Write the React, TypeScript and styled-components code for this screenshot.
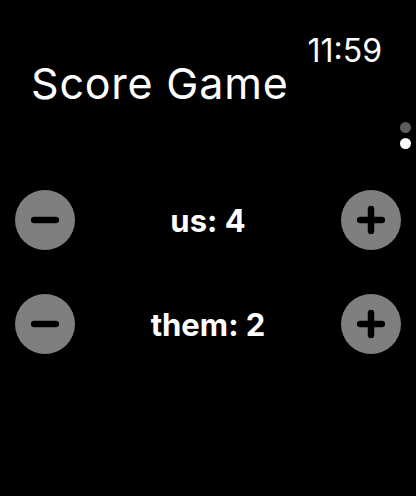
import React, { useState } from 'react'
import styled, { createGlobalStyle } from 'styled-components'

const GlobalStyle = createGlobalStyle`
  html, body {
    margin: 0;
    padding: 0;
    background: #000;
  }
  body {
    font-family: Inter, "Liberation Sans", sans-serif;
    color: #fff;
  }
`

const Screen = styled.div`
  position: relative;
  width: 416px;
  height: 496px;
  background: #000;
  display: flex;
  flex-direction: column;
  overflow: hidden;
`

const StatusBar = styled.div`
  display: flex;
  justify-content: flex-end;
  padding: 37px 34px 0 0;
  height: 28px;
`

const Clock = styled.span`
  font-size: 32px;
  line-height: 28px;
  font-weight: 400;
`

const Title = styled.h1`
  margin: 0;
  padding: 0 0 0 31px;
  font-size: 43px;
  line-height: 36px;
  font-weight: 400;
  letter-spacing: 0.8px;
`

const Rows = styled.div`
  display: flex;
  flex-direction: column;
  gap: 44px;
  margin-top: 89px;
  padding: 0 15px;
`

const Row = styled.div`
  display: grid;
  grid-template-columns: 60px 1fr 60px;
  align-items: center;
  height: 60px;
`

const Label = styled.span`
  text-align: center;
  font-size: 31px;
  font-weight: 700;
`

const RoundButton = styled.button`
  width: 60px;
  height: 60px;
  border-radius: 50%;
  border: none;
  padding: 0;
  background: #7f7f7f;
  display: flex;
  align-items: center;
  justify-content: center;
  cursor: pointer;
`

const PageDots = styled.div`
  position: absolute;
  right: 5px;
  top: 122px;
  display: flex;
  flex-direction: column;
  gap: 5px;
`

const Dot = styled.span<{ active?: boolean }>`
  width: 11px;
  height: 11px;
  border-radius: 50%;
  background: ${(p) => (p.active ? '#fff' : '#5c5c5c')};
`

function Glyph({ plus }: { plus?: boolean }) {
  return (
    <svg width="28" height="28" viewBox="0 0 28 28">
      <path d="M3 14h22" stroke="#000" strokeWidth="6.5" strokeLinecap="round" />
      {plus && <path d="M14 3v22" stroke="#000" strokeWidth="6.5" strokeLinecap="round" />}
    </svg>
  )
}

function ScoreRow({ name, value, onChange }: { name: string; value: number; onChange: (n: number) => void }) {
  return (
    <Row>
      <RoundButton onClick={() => onChange(value - 1)}>
        <Glyph />
      </RoundButton>
      <Label>
        {name}: {value}
      </Label>
      <RoundButton onClick={() => onChange(value + 1)}>
        <Glyph plus />
      </RoundButton>
    </Row>
  )
}

export default function App() {
  const [us, setUs] = useState(4)
  const [them, setThem] = useState(2)
  return (
    <Screen>
      <GlobalStyle />
      <StatusBar>
        <Clock>11:59</Clock>
      </StatusBar>
      <Title>Score Game</Title>
      <PageDots>
        <Dot />
        <Dot active />
      </PageDots>
      <Rows>
        <ScoreRow name="us" value={us} onChange={setUs} />
        <ScoreRow name="them" value={them} onChange={setThem} />
      </Rows>
    </Screen>
  )
}
